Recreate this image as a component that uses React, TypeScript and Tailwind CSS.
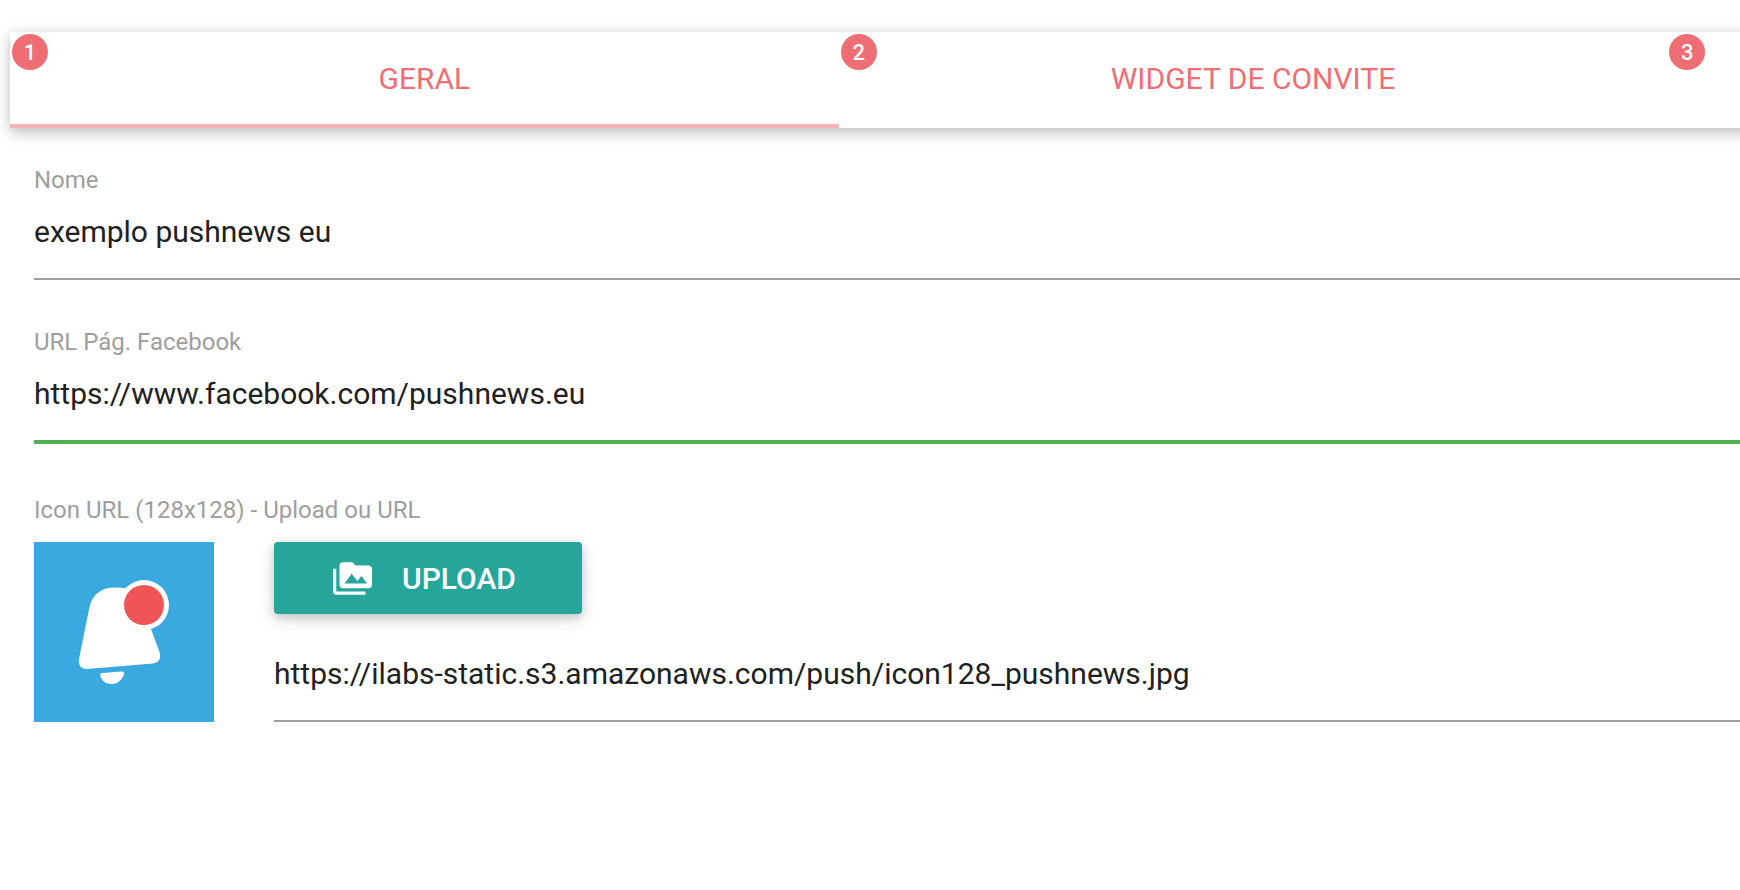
import { useState } from "react";
import type { InputHTMLAttributes } from "react";
import clsx from "clsx";
import { MdPermMedia } from "react-icons/md";

const tabs = [
  { id: "geral", label: "Geral" },
  { id: "widget", label: "Widget de convite" },
  { id: "extra", label: "" },
];

const labelClass = "block text-[24px] leading-8 text-[#9e9e9e]";

function TextInput({ valid, ...props }: InputHTMLAttributes<HTMLInputElement> & { valid?: boolean }) {
  return (
    <input
      type="text"
      className={clsx(
        "block w-full bg-transparent pb-3 text-[30px] text-[#212121] outline-none",
        valid ? "h-[86px] border-b-4 border-[#4caf50]" : "h-[84px] border-b-2 border-[#9e9e9e]"
      )}
      {...props}
    />
  );
}

function BellIcon() {
  return (
    <svg viewBox="0 0 180 180" className="size-[180px] shrink-0" role="img" aria-label="Pushnews">
      <rect width="180" height="180" fill="#39a9df" />
      <path
        fill="#fff"
        d="M81 45.5C67 45.5 58 53 55.5 65L45 117C44 123 47 127 53 127L119 121.500C125 121 127.500 116 125.500 110L117 87L105 50C98 47 90 45.500 81 45.500Z"
      />
      <path fill="#fff" d="M68.500 131L87.500 129.500C90 129.300 90.500 131 89.500 133.500C87 139 83 142 78 142C72 142 67.500 138.500 66.300 133.500C66 132 66.500 131.200 68.500 131Z" />
      <circle cx="110" cy="63" r="25" fill="#fff" />
      <circle cx="110" cy="63" r="20" fill="#f15456" />
    </svg>
  );
}

export default function App() {
  const [active, setActive] = useState("geral");
  const [name, setName] = useState("exemplo pushnews eu");
  const [facebook, setFacebook] = useState("https://www.facebook.com/pushnews.eu");
  const [iconUrl, setIconUrl] = useState("https://ilabs-static.s3.amazonaws.com/push/icon128_pushnews.jpg");

  return (
    <div className="min-h-screen overflow-hidden bg-white pt-8 font-[Roboto,sans-serif]">
      <div className="ml-2.5 -mr-8 shadow-[0_4px_10px_rgba(0,0,0,0.16),0_4px_20px_rgba(0,0,0,0.12)]">
        <nav className="mr-8 flex h-24">
          {tabs.map((tab, index) => (
            <button
              key={tab.id}
              type="button"
              aria-label={tab.label || `${index + 1}`}
              onClick={() => setActive(tab.id)}
              className={clsx(
                "relative flex w-[47.9%] shrink-0 items-center justify-center border-b-4 text-[30px] text-[#ee6e73] uppercase",
                active === tab.id ? "border-[#f6b2b5]" : "border-transparent"
              )}
            >
              <span className="absolute top-0.5 left-0.5 flex size-9 items-center justify-center rounded-full bg-[#ee6e73] text-[22px] font-medium text-white">
                {index + 1}
              </span>
              {tab.label}
            </button>
          ))}
        </nav>
      </div>

      <form className="pt-9 pl-[34px]">
        <div>
          <label htmlFor="name" className={labelClass}>
            Nome
          </label>
          <TextInput id="name" value={name} onChange={(e) => setName(e.target.value)} />
        </div>

        <div className="mt-[46px]">
          <label htmlFor="facebook" className={labelClass}>
            URL Pág. Facebook
          </label>
          <TextInput id="facebook" valid value={facebook} onChange={(e) => setFacebook(e.target.value)} />
        </div>

        <div className="mt-[50px]">
          <label htmlFor="icon-url" className={labelClass}>
            Icon URL (128x128) - Upload ou URL
          </label>
          <div className="mt-4 flex gap-[60px]">
            <BellIcon />
            <div className="flex-1">
              <button
                type="button"
                className="flex h-[72px] min-w-[308px] items-center gap-[30px] rounded bg-[#26a69a] px-[59px] text-[30px] font-medium text-white uppercase shadow-[0_4px_10px_rgba(0,0,0,0.16),0_4px_20px_rgba(0,0,0,0.12)]"
              >
                <MdPermMedia className="size-[39px]" />
                Upload
              </button>
              <div className="mt-6">
                <TextInput id="icon-url" value={iconUrl} onChange={(e) => setIconUrl(e.target.value)} />
              </div>
            </div>
          </div>
        </div>
      </form>
    </div>
  );
}
